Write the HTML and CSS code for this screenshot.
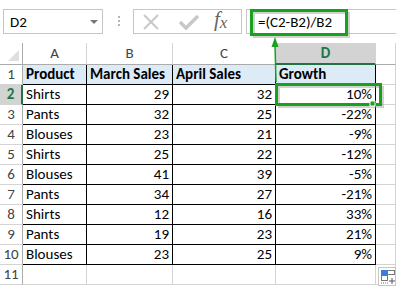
FILE: index.html
```html
<!DOCTYPE html>
<html lang="en">
<head>
    <meta charset="UTF-8">
    <title>Growth formula</title>
    <link rel="stylesheet" href="styles.css">
</head>
<body>
    <div class="formula-bar">
        <div class="name-box">
            <span>D2</span>
            <span class="caret"></span>
        </div>
        <div class="grip"><i></i><i></i><i></i></div>
        <div class="fx-buttons">
            <svg class="btn-icon" width="18" height="16" viewBox="0 0 18 16">
                <path d="M2 1 L16 15 M16 1 L2 15" stroke="#c8c8c8" stroke-width="2" fill="none"/>
            </svg>
            <svg class="btn-icon" width="20" height="16" viewBox="0 0 20 16">
                <path d="M1 8 L7 14 L19 2" stroke="#c8c8c8" stroke-width="3.5" fill="none"/>
            </svg>
            <span class="fx">f<sub>x</sub></span>
        </div>
        <div class="formula-input">=(C2-B2)/B2</div>
    </div>

    <div class="sheet">
        <div class="corner"><span></span></div>
        <div class="col-head">A</div>
        <div class="col-head">B</div>
        <div class="col-head">C</div>
        <div class="col-head active">D</div>
        <div class="col-head"></div>

        <div class="row-head">1</div>
        <div class="cell title">Product</div>
        <div class="cell title">March Sales</div>
        <div class="cell title">April Sales</div>
        <div class="cell title">Growth</div>
        <div class="grid"></div>

        <div class="row-head active">2</div>
        <div class="cell">Shirts</div>
        <div class="cell num">29</div>
        <div class="cell num">32</div>
        <div class="cell num">10%</div>
        <div class="grid"></div>

        <div class="row-head">3</div>
        <div class="cell">Pants</div>
        <div class="cell num">32</div>
        <div class="cell num">25</div>
        <div class="cell num">-22%</div>
        <div class="grid"></div>

        <div class="row-head">4</div>
        <div class="cell">Blouses</div>
        <div class="cell num">23</div>
        <div class="cell num">21</div>
        <div class="cell num">-9%</div>
        <div class="grid"></div>

        <div class="row-head">5</div>
        <div class="cell">Shirts</div>
        <div class="cell num">25</div>
        <div class="cell num">22</div>
        <div class="cell num">-12%</div>
        <div class="grid"></div>

        <div class="row-head">6</div>
        <div class="cell">Blouses</div>
        <div class="cell num">41</div>
        <div class="cell num">39</div>
        <div class="cell num">-5%</div>
        <div class="grid"></div>

        <div class="row-head">7</div>
        <div class="cell">Pants</div>
        <div class="cell num">34</div>
        <div class="cell num">27</div>
        <div class="cell num">-21%</div>
        <div class="grid"></div>

        <div class="row-head">8</div>
        <div class="cell">Shirts</div>
        <div class="cell num">12</div>
        <div class="cell num">16</div>
        <div class="cell num">33%</div>
        <div class="grid"></div>

        <div class="row-head">9</div>
        <div class="cell">Pants</div>
        <div class="cell num">19</div>
        <div class="cell num">23</div>
        <div class="cell num">21%</div>
        <div class="grid"></div>

        <div class="row-head">10</div>
        <div class="cell">Blouses</div>
        <div class="cell num">23</div>
        <div class="cell num">25</div>
        <div class="cell num">9%</div>
        <div class="grid"></div>

        <div class="row-head">11</div>
        <div class="grid"></div>
        <div class="grid"></div>
        <div class="grid"></div>
        <div class="grid"></div>
        <div class="grid"></div>
    </div>

    <!-- callout drawn over the sheet -->
    <svg class="callout" width="396" height="287" viewBox="0 0 396 287">
        <g stroke="#9a9a9a" stroke-opacity="0.45" fill="none" stroke-width="2">
            <rect x="254" y="13" width="95" height="24"/>
            <rect x="279" y="87" width="104" height="20"/>
        </g>
        <rect x="251.5" y="10.5" width="95" height="24" fill="none" stroke="#17a11c" stroke-width="3"/>
        <rect x="276.5" y="84.5" width="104" height="20" fill="none" stroke="#17a11c" stroke-width="3"/>
        <rect x="370" y="101" width="5" height="5" fill="#17a11c" stroke="#fff" stroke-width="1"/>
        <path d="M276 82 L275 44" stroke="#17a11c" stroke-width="1.5" fill="none"/>
        <path d="M275 37 L271.5 47 L278.5 47 Z" fill="#17a11c"/>
    </svg>

    <div class="paste-options">
        <svg width="16" height="16" viewBox="0 0 16 16">
            <rect x="1" y="1" width="6" height="5" fill="#3b7dd8"/>
            <rect x="7.5" y="1.5" width="7" height="4" fill="#fff" stroke="#777"/>
            <rect x="1.5" y="6.5" width="6" height="5" fill="#fff" stroke="#777"/>
            <path d="M1 14 h1 M3 14 h1 M5 14 h1 M7 14 h1" stroke="#777"/>
            <path d="M12 9 v6 M9 12 h6" stroke="#555"/>
        </svg>
    </div>
</body>
</html>
```

FILE: styles.css
```css
body {
    margin: 0;
    width: 396px;
    height: 287px;
    overflow: hidden;
    background-color: #fff;
    font-family: "Carlito", "Lato", "Liberation Sans", sans-serif;
    font-size: 15px;
    color: #000;
    position: relative;
}

/* formula bar */
.formula-bar {
    display: flex;
    align-items: flex-start;
    height: 43px;
    padding: 9px 0 0 3px;
    box-sizing: border-box;
}
.name-box {
    display: flex;
    align-items: center;
    justify-content: space-between;
    width: 100px;
    height: 25px;
    box-sizing: border-box;
    border: 1px solid #c6c6c6;
    padding: 0 4px 0 6px;
}
.caret {
    width: 0;
    height: 0;
    border-left: 4px solid transparent;
    border-right: 4px solid transparent;
    border-top: 4px solid #777;
}
.grip {
    display: flex;
    flex-direction: column;
    gap: 2px;
    margin: 7px 13px 0 15px;
}
.grip i {
    width: 2px;
    height: 2px;
    background-color: #b4b4b4;
}
.fx-buttons {
    display: flex;
    align-items: center;
    width: 109px;
    height: 25px;
    box-sizing: border-box;
    border: 1px solid #c6c6c6;
    padding-left: 8px;
}
.btn-icon {
    margin-right: 19px;
}
.fx {
    font-family: "Liberation Serif", serif;
    font-style: italic;
    font-size: 21px;
    color: #666;
    line-height: 1;
    margin-top: -3px;
    margin-left: -4px;
}
.fx sub {
    font-size: 17px;
    vertical-align: -2px;
}
.formula-input {
    flex: 1;
    height: 25px;
    box-sizing: border-box;
    border: 1px solid #c6c6c6;
    border-right: none;
    margin-left: 4px;
    padding: 3px 0 0 11px;
}

/* sheet grid */
.sheet {
    display: grid;
    grid-template-columns: 23px 64px 86px 103px 100px 1fr;
    grid-template-rows: 22px repeat(11, 20px);
}
.sheet > div {
    box-sizing: border-box;
    white-space: nowrap;
    overflow: hidden;
    line-height: 19px;
}
.corner {
    border-right: 1px solid #ababab;
    border-bottom: 1px solid #ababab;
    position: relative;
}
.corner span {
    position: absolute;
    right: 3px;
    bottom: 3px;
    width: 0;
    height: 0;
    border-left: 11px solid transparent;
    border-bottom: 11px solid #dfdfdf;
}
.col-head {
    text-align: center;
    color: #444;
    line-height: 21px !important;
    border-right: 1px solid #d4d4d4;
    border-bottom: 1px solid #ababab;
}
.col-head.active {
    background-color: #d3d3d3;
    color: #217346;
    font-weight: bold;
    border-bottom: 2px solid #217346;
}
.row-head {
    text-align: center;
    color: #444;
    border-right: 1px solid #ababab;
    border-bottom: 1px solid #d4d4d4;
}
.row-head.active {
    background-color: #d3d3d3;
    color: #217346;
    font-weight: bold;
    border-right: 2px solid #217346;
}
.cell {
    padding: 0 3px;
    border-right: 1px solid #000;
    border-bottom: 1px solid #000;
}
.cell.title {
    background-color: #ddebf7;
    font-weight: bold;
}
.cell.num {
    text-align: right;
}
.grid {
    border-right: 1px solid #d4d4d4;
    border-bottom: 1px solid #d4d4d4;
}

/* overlays */
.callout {
    position: absolute;
    left: 0;
    top: 0;
    pointer-events: none;
}
.paste-options {
    position: absolute;
    left: 378px;
    top: 267px;
    width: 18px;
    height: 19px;
    box-sizing: border-box;
    border: 1px solid #c6c6c6;
    background-color: #fff;
    padding: 1px 0 0 1px;
}
```
